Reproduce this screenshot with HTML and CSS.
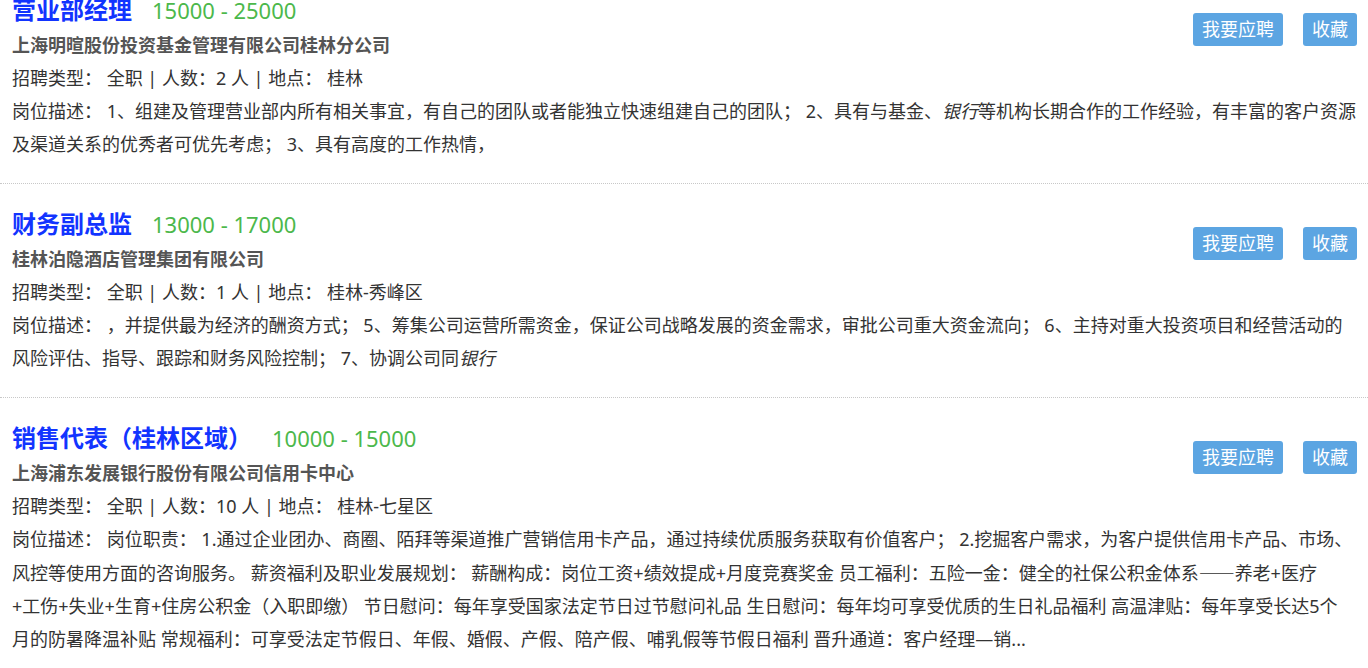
FILE: index.html
```html
<!DOCTYPE html>
<html lang="zh-CN">
<head>
  <meta charset="UTF-8">
  <meta name="viewport" content="width=device-width, initial-scale=1.0">
  <title>职位列表 - 桂林</title>
  <link rel="stylesheet" href="styles.css">
</head>
<body>
  <div class="job-list">
    <div class="job-item">
      <div class="job-actions">
        <a href="#" class="btn">我要应聘</a>
        <a href="#" class="btn">收藏</a>
      </div>
      <div class="job-title"><a href="#">营业部经理</a><span class="salary">15000 - 25000</span></div>
      <div class="company">上海明暄股份投资基金管理有限公司桂林分公司</div>
      <div class="job-meta">招聘类型： 全职 | 人数：2 人 | 地点： 桂林</div>
      <div class="job-desc">岗位描述： 1、组建及管理营业部内所有相关事宜，有自己的团队或者能独立快速组建自己的团队； 2、具有与基金、<em>银行</em>等机构长期合作的工作经验，有丰富的客户资源及渠道关系的优秀者可优先考虑； 3、具有高度的工作热情，</div>
    </div>

    <div class="job-item">
      <div class="job-actions">
        <a href="#" class="btn">我要应聘</a>
        <a href="#" class="btn">收藏</a>
      </div>
      <div class="job-title"><a href="#">财务副总监</a><span class="salary">13000 - 17000</span></div>
      <div class="company">桂林泊隐酒店管理集团有限公司</div>
      <div class="job-meta">招聘类型： 全职 | 人数：1 人 | 地点： 桂林-秀峰区</div>
      <div class="job-desc">岗位描述： ，并提供最为经济的酬资方式； 5、筹集公司运营所需资金，保证公司战略发展的资金需求，审批公司重大资金流向； 6、主持对重大投资项目和经营活动的风险评估、指导、跟踪和财务风险控制； 7、协调公司同<em>银行</em></div>
    </div>

    <div class="job-item">
      <div class="job-actions">
        <a href="#" class="btn">我要应聘</a>
        <a href="#" class="btn">收藏</a>
      </div>
      <div class="job-title"><a href="#">销售代表（桂林区域）</a><span class="salary">10000 - 15000</span></div>
      <div class="company">上海浦东发展银行股份有限公司信用卡中心</div>
      <div class="job-meta">招聘类型： 全职 | 人数：10 人 | 地点： 桂林-七星区</div>
      <div class="job-desc">岗位描述： 岗位职责： 1.通过企业团办、商圈、陌拜等渠道推广营销信用卡产品，通过持续优质服务获取有价值客户； 2.挖掘客户需求，为客户提供信用卡产品、市场、风控等使用方面的咨询服务。 薪资福利及职业发展规划： 薪酬构成：岗位工资+绩效提成+月度竞赛奖金 员工福利：五险一金：健全的社保公积金体系<span class="dash">——</span>养老+医疗<br>+工伤+失业+生育+住房公积金（入职即缴） 节日慰问：每年享受国家法定节日过节慰问礼品 生日慰问：每年均可享受优质的生日礼品福利 高温津贴：每年享受长达5个<br>月的防暑降温补贴 常规福利：可享受法定节假日、年假、婚假、产假、陪产假、哺乳假等节假日福利 晋升通道：客户经理—销...</div>
    </div>
  </div>
</body>
</html>
```

FILE: styles.css
```css
body {
  font-family: "Noto Sans", "Noto Sans CJK SC", sans-serif;
  background-color: #fff;
  color: #333;
  margin: 0;
}
a {
  text-decoration: none;
}
.job-list {
  /* page is scrolled a little, first card starts above the viewport */
  margin-top: -30px;
}
.job-item {
  padding: 22px 11px 22px 12px;
  border-bottom: 1px dotted #c8c8c8;
}
.job-actions {
  float: right;
  display: flex;
  gap: 20px;
  margin-top: 21px;
}
.btn {
  background-color: #5ca5e2;
  color: #fff;
  font-size: 18px;
  line-height: 33px;
  height: 33px;
  padding: 0 9px;
  border-radius: 3px;
}
.job-title {
  line-height: 36px;
  height: 36px;
}
.job-title a {
  font-size: 24px;
  font-weight: bold;
  color: #1234ff;
}
.salary {
  font-size: 22px;
  color: #4cb84b;
  margin-left: 20px;
}
.company {
  font-size: 18px;
  font-weight: bold;
  color: #555;
  line-height: 34px;
}
.job-meta {
  font-size: 18px;
  line-height: 33px;
}
.job-desc {
  font-size: 18px;
  line-height: 33px;
}
.job-desc em {
  font-style: italic;
}
.dash {
  /* full-width dashes, like the CJK fallback font draws them */
  font-family: "Noto Sans CJK SC", sans-serif;
}
```
